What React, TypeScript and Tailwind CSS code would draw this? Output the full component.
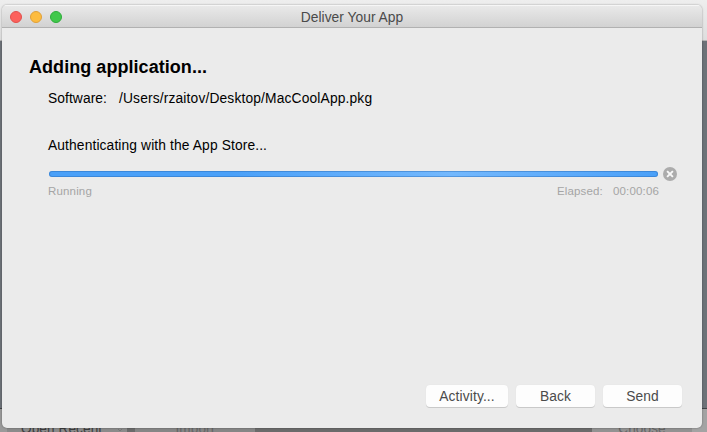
import React from "react";

function WindowButton({ className }: { className: string }) {
  return <span className={`size-3 rounded-full border ${className}`} />;
}

function TitleBar() {
  return (
    <header className="relative flex h-[23px] shrink-0 items-center justify-center border-b border-[#b1b1b1] bg-linear-to-b from-[#eaeaea] to-[#d2d2d2] pt-[3px] shadow-[inset_0_1px_0_#f6f6f6]">
      <div className="absolute left-2 top-[6px] flex gap-2">
        <WindowButton className="border-[#e2504c] bg-[#fc615c]" />
        <WindowButton className="border-[#e0a03a] bg-[#fdbc40]" />
        <WindowButton className="border-[#2dac3a] bg-[#41c84b]" />
      </div>
      <h1 className="whitespace-nowrap text-[13.8px] leading-4 tracking-[0.03px] text-[#4a4a4a]">Deliver Your App</h1>
    </header>
  );
}

function PushButton({ label, className }: { label: string; className: string }) {
  return (
    <button
      className={`flex h-[22px] items-center justify-center whitespace-nowrap rounded-[4px] bg-[#fdfdfd] pt-px text-[13.8px] leading-4 tracking-[0.12px] text-[#4b4b4b] shadow-[0_1px_0_#c9c9c9,0_0_1px_#d8d8d8] ${className}`}
    >
      {label}
    </button>
  );
}

function BackgroundWindow() {
  return (
    <div className="flex h-full flex-col">
      <div className="h-10 shrink-0 bg-linear-to-b from-[#eeeeee] to-[#dedede]" />
      <div className="h-px shrink-0 bg-[#b5b5b5]" />
      <div className="flex-1 bg-[#6d7278]" />
      <div className="flex h-6 shrink-0 items-start border-t border-[#404347] bg-linear-to-r from-[#9a9a9a] from-1% via-[#6b6b6b] via-2% to-[#6b6b6b] pt-[10px] text-[13.6px] leading-[18px] tracking-[0.1px] text-[#3d3d3d]">
        <div className="ml-[7px] flex h-5 w-[120px] items-center whitespace-nowrap bg-[#8b8b8b] pl-[14px]">
          Open Recent
          <svg className="ml-[14px] mt-1 size-2" viewBox="0 0 8 8" fill="none" stroke="#777" strokeWidth="1">
            <path d="m2 2 2 2 2-2" />
          </svg>
        </div>
        <div className="ml-2 h-5 w-[120px] bg-[#868686] pt-px text-center text-[#656565]">Import</div>
        <div className="ml-auto h-5 w-[100px] bg-[#929292] pt-px text-center text-[#656565]">Choose</div>
        <div className="-mt-[10px] h-[30px] w-[15px] bg-[#a3a3a3]" />
      </div>
    </div>
  );
}

export default function App() {
  return (
    <main className="relative h-[432px] w-[707px] overflow-hidden bg-[#6d7278] font-['Liberation_Sans',Arial,sans-serif]">
      <BackgroundWindow />
      <section className="absolute left-[2px] top-[5px] flex h-[423px] w-[700px] flex-col overflow-hidden rounded-[5px] bg-[#ebebeb] shadow-[0_0_2px_rgba(0,0,0,0.4)]">
        <TitleBar />
        <div className="flex flex-1 flex-col pb-[21px] pl-[27px] pr-5 pt-[28px] text-black">
          <h2 className="text-[18px] font-bold leading-[22px] tracking-[0.05px]">Adding application...</h2>
          <div className="ml-[19px] mt-[13px] flex h-4 whitespace-nowrap text-[13.8px] leading-4 tracking-[0.08px]">
            <span className="w-[71px]">Software:</span>
            <span className="tracking-[0.15px]">/Users/rzaitov/Desktop/MacCoolApp.pkg</span>
          </div>
          <p className="ml-[19px] mt-[31px] h-4 whitespace-nowrap text-[13.8px] leading-4 tracking-[0.12px]">Authenticating with the App Store...</p>
          <div className="ml-5 mt-[13px] flex h-[14px] items-center">
            <div className="h-[6px] w-[609px] rounded-[3px] bg-linear-to-r from-[#4aa0f8] from-30% via-[#73b8fd] via-66% to-[#4aa0f8] shadow-[inset_0_0_0_1px_rgba(35,100,175,0.4)]" />
            <svg className="ml-[5px] size-[14px]" viewBox="0 0 14 14">
              <circle cx="7" cy="7" r="7" fill="#acacac" />
              <path d="m4.1 4.1 5.8 5.8m0-5.8L4.1 9.9" stroke="#f8f8f8" strokeWidth="2" />
            </svg>
          </div>
          <div className="ml-[19px] mt-[3px] flex h-[14px] w-[611px] whitespace-nowrap text-[11.5px] leading-[14px] tracking-[0.16px] text-[#a5a5a5]">
            <span>Running</span>
            <span className="ml-auto">Elapsed:</span>
            <span className="ml-[10px]">00:00:06</span>
          </div>
          <footer className="mt-auto flex justify-end gap-2">
            <PushButton label="Activity..." className="w-[82px]" />
            <PushButton label="Back" className="w-[79px]" />
            <PushButton label="Send" className="w-[79px]" />
          </footer>
        </div>
      </section>
    </main>
  );
}
